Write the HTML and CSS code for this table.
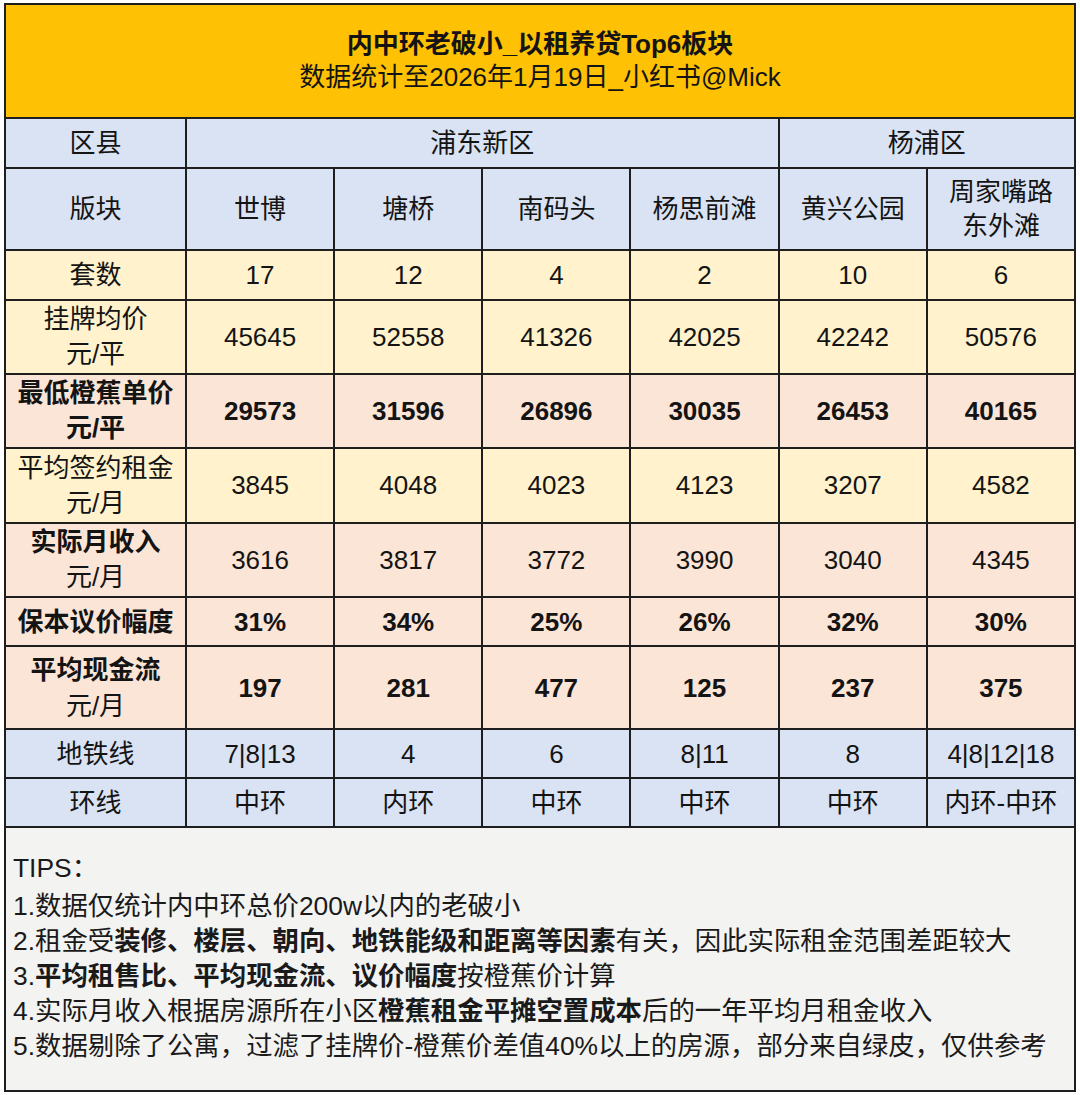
FILE: index.html
```html
<!DOCTYPE html>
<html lang="zh-CN">
<head>
<meta charset="utf-8">
<title>内中环老破小_以租养贷Top6板块</title>
<link rel="stylesheet" href="styles.css">
</head>
<body>
<div class="page">
<table class="sheet">
  <colgroup>
    <col class="c-label">
    <col class="c-data"><col class="c-data"><col class="c-data">
    <col class="c-data"><col class="c-data"><col class="c-data">
  </colgroup>
  <tr class="r-title">
    <td colspan="7">
      <div class="title">内中环老破小_以租养贷Top6板块</div>
      <div class="subtitle">数据统计至2026年1月19日_小红书@Mick</div>
    </td>
  </tr>
  <tr class="blue h-district">
    <td>区县</td><td colspan="4">浦东新区</td><td colspan="2">杨浦区</td>
  </tr>
  <tr class="blue h-block">
    <td>版块</td><td>世博</td><td>塘桥</td><td>南码头</td><td>杨思前滩</td><td>黄兴公园</td><td>周家嘴路<br>东外滩</td>
  </tr>
  <tr class="yellow h-50">
    <td>套数</td><td>17</td><td>12</td><td>4</td><td>2</td><td>10</td><td>6</td>
  </tr>
  <tr class="yellow h-74">
    <td>挂牌均价<br>元/平</td><td>45645</td><td>52558</td><td>41326</td><td>42025</td><td>42242</td><td>50576</td>
  </tr>
  <tr class="peach h-74 bold">
    <td>最低橙蕉单价<br>元/平</td><td>29573</td><td>31596</td><td>26896</td><td>30035</td><td>26453</td><td>40165</td>
  </tr>
  <tr class="yellow h-75">
    <td>平均签约租金<br>元/月</td><td>3845</td><td>4048</td><td>4023</td><td>4123</td><td>3207</td><td>4582</td>
  </tr>
  <tr class="peach h-74">
    <td><b>实际月收入</b><br>元/月</td><td>3616</td><td>3817</td><td>3772</td><td>3990</td><td>3040</td><td>4345</td>
  </tr>
  <tr class="peach h-49 bold">
    <td>保本议价幅度</td><td>31%</td><td>34%</td><td>25%</td><td>26%</td><td>32%</td><td>30%</td>
  </tr>
  <tr class="peach h-83 bold">
    <td>平均现金流<br><span class="norm">元/月</span></td><td>197</td><td>281</td><td>477</td><td>125</td><td>237</td><td>375</td>
  </tr>
  <tr class="blue h-49">
    <td>地铁线</td><td>7|8|13</td><td>4</td><td>6</td><td>8|11</td><td>8</td><td>4|8|12|18</td>
  </tr>
  <tr class="blue h-49">
    <td>环线</td><td>中环</td><td>内环</td><td>中环</td><td>中环</td><td>中环</td><td>内环-中环</td>
  </tr>
  <tr class="r-tips">
    <td colspan="7">
      <div class="tips-head">TIPS：</div>
      <div>1.数据仅统计内中环总价200w以内的老破小</div>
      <div>2.租金受<b>装修、楼层、朝向、地铁能级和距离等因素</b>有关，因此实际租金范围差距较大</div>
      <div>3.<b>平均租售比、平均现金流、议价幅度</b>按橙蕉价计算</div>
      <div>4.实际月收入根据房源所在小区<b>橙蕉租金平摊空置成本</b>后的一年平均月租金收入</div>
      <div>5.数据剔除了公寓，过滤了挂牌价-橙蕉价差值40%以上的房源，部分来自绿皮，仅供参考</div>
    </td>
  </tr>
</table>
</div>
</body>
</html>
```

FILE: styles.css
```css
* { box-sizing: border-box; }

html, body {
  margin: 0;
  padding: 0;
  background: #ffffff;
}

body {
  font-family: "Liberation Sans", "Noto Sans CJK SC", sans-serif;
  color: #141414;
}

.page {
  padding: 3px 0 0 4px;
}

.sheet {
  width: 1072px;
  border-collapse: collapse;
  table-layout: fixed;
  font-size: 26px;
}

.c-label { width: 181px; }

.sheet td {
  border: 2px solid #1e1e1e;
  padding: 0;
  text-align: center;
  vertical-align: middle;
  line-height: 36px;
}

.r-title td {
  background: #ffc104;
  height: 114px;
  line-height: 33px;
}

.title { font-weight: 700; }

.blue td { background: #dae3f3; }
.yellow td { background: #fff2cd; }
.peach td { background: #fbe5d6; }

.bold td { font-weight: 700; }
.norm { font-weight: 400; }

.h-district td { height: 50px; }
.h-block td { height: 82px; line-height: 34px; }
.h-50 td { height: 50px; }
.h-74 td { height: 74px; line-height: 35px; }
.h-75 td { height: 75px; line-height: 35px; }
.h-49 td { height: 49px; }
.h-83 td { height: 83px; line-height: 36px; }

.r-tips td {
  background: #f3f3f2;
  height: 264px;
  text-align: left;
  vertical-align: top;
  padding: 23px 0 0 7px;
  font-size: 26.4px;
  line-height: 35px;
  color: #1a1a1a;
}

.tips-head { margin-bottom: 3px; }

.r-tips b { font-weight: 700; }
```
